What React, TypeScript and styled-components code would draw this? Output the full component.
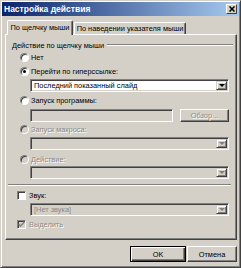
import React from "react";
import styled, { createGlobalStyle } from "styled-components";

const Face = "#d4d0c8";
const Shadow = "#808080";
const DarkShadow = "#404040";
const Highlight = "#ffffff";
const GrayText = "#8c8984";

const GlobalStyle = createGlobalStyle`
  html, body {
    margin: 0;
    padding: 0;
    background: ${Face};
  }
  body {
    font-family: "Liberation Sans", Arial, sans-serif;
    font-size: 7.4px;
    color: #000;
  }
  * {
    box-sizing: border-box;
  }
`;

const Window = styled.div`
  width: 241px;
  height: 268px;
  background: ${Face};
  border: 1px solid;
  border-color: ${Face} ${DarkShadow} ${DarkShadow} ${Face};
  box-shadow: inset 1px 1px ${Highlight}, inset -1px -1px ${Shadow};
  padding: 1px;
  display: flex;
  flex-direction: column;
`;

const TitleBar = styled.div`
  height: 14px;
  background: linear-gradient(to right, #0a246a, #a6caf0);
  display: flex;
  align-items: center;
  justify-content: space-between;
  padding: 0 2px 0 2px;
`;

const Title = styled.span`
  color: #fff;
  font-weight: bold;
  font-size: 8.5px;
`;

const CloseButton = styled.div`
  width: 11px;
  height: 10px;
  background: ${Face};
  border: 1px solid;
  border-color: ${Highlight} ${DarkShadow} ${DarkShadow} ${Highlight};
  display: flex;
  align-items: center;
  justify-content: center;
`;

const Body = styled.div`
  display: flex;
  flex-direction: column;
  padding: 4px 2px 0 3px;
`;

const TabStrip = styled.div`
  display: flex;
  align-items: flex-end;
  gap: 1px;
  padding-left: 2px;
  height: 14px;
  position: relative;
  z-index: 1;
`;

const Tab = styled.div<{ $active?: boolean; $width: number }>`
  width: ${(p) => p.$width}px;
  height: ${(p) => (p.$active ? 15 : 12)}px;
  margin-bottom: ${(p) => (p.$active ? -1 : 0)}px;
  background: ${Face};
  border-top: 1px solid ${Highlight};
  border-left: 1px solid ${Highlight};
  border-right: 1px solid ${DarkShadow};
  border-radius: 2px 2px 0 0;
  box-shadow: inset -1px 0 ${Shadow};
  display: flex;
  align-items: center;
  padding-bottom: ${(p) => (p.$active ? 1 : 0)}px;
  justify-content: center;
  white-space: nowrap;
`;

const Panel = styled.div`
  height: 206px;
  border: 1px solid;
  border-color: ${Highlight} ${DarkShadow} ${DarkShadow} ${Highlight};
  box-shadow: inset -1px -1px ${Shadow};
  padding: 5px 3px 0 6px;
  display: flex;
  flex-direction: column;
`;

const GroupHeader = styled.div`
  height: 10px;
  display: flex;
  align-items: center;
  gap: 3px;
  white-space: nowrap;
`;

const EtchedLine = styled.div<{ $top?: number; $left?: number; $right?: number; $fixed?: boolean }>`
  flex: ${(p) => (p.$fixed ? "none" : 1)};
  height: 2px;
  margin: ${(p) => p.$top ?? 0}px ${(p) => p.$right ?? 0}px 0 ${(p) => p.$left ?? 0}px;
  border-top: 1px solid ${Shadow};
  border-bottom: 1px solid ${Highlight};
`;

const OptionRow = styled.label<{ $top: number; $indent: number; $disabled?: boolean }>`
  height: 12px;
  margin-top: ${(p) => p.$top}px;
  margin-left: ${(p) => p.$indent}px;
  display: flex;
  align-items: center;
  gap: 2px;
  white-space: nowrap;
  color: ${(p) => (p.$disabled ? GrayText : "#000")};
  text-shadow: ${(p) => (p.$disabled ? `1px 1px ${Highlight}` : "none")};
`;

const RadioCircle = styled.span<{ $disabled?: boolean }>`
  width: 9px;
  height: 9px;
  border-radius: 50%;
  border: 1px solid;
  border-color: ${Shadow} ${Highlight} ${Highlight} ${Shadow};
  box-shadow: inset 1px 1px ${DarkShadow};
  background: ${(p) => (p.$disabled ? Face : "#fff")};
  display: flex;
  align-items: center;
  justify-content: center;
  flex: none;
`;

const RadioDot = styled.span`
  width: 3px;
  height: 3px;
  border-radius: 50%;
  background: #000;
`;

const CheckBox = styled.span<{ $disabled?: boolean }>`
  width: 9px;
  height: 9px;
  border: 1px solid;
  border-color: ${Shadow} ${Highlight} ${Highlight} ${Shadow};
  box-shadow: inset 1px 1px ${DarkShadow};
  background: ${(p) => (p.$disabled ? Face : "#fff")};
  display: flex;
  align-items: center;
  justify-content: center;
  flex: none;
  margin-right: 1px;
`;

const FieldRow = styled.div<{ $top: number }>`
  margin-top: ${(p) => p.$top}px;
  margin-left: 18px;
  margin-right: 4px;
  display: flex;
  gap: 7px;
`;

const Sunken = styled.div<{ $disabled?: boolean }>`
  flex: 1;
  height: 13px;
  border: 1px solid;
  border-color: ${Shadow} ${Highlight} ${Highlight} ${Shadow};
  box-shadow: inset 1px 1px ${DarkShadow}, inset -1px -1px ${Face};
  background: ${(p) => (p.$disabled ? Face : "#fff")};
  display: flex;
  align-items: center;
  padding: 1px 1px 1px 3px;
  white-space: nowrap;
  color: ${(p) => (p.$disabled ? GrayText : "#000")};
`;

const ComboText = styled.span`
  flex: 1;
  overflow: hidden;
`;

const DropButton = styled.span`
  width: 11px;
  height: 9px;
  background: ${Face};
  border: 1px solid;
  border-color: ${Face} ${DarkShadow} ${DarkShadow} ${Face};
  box-shadow: inset 1px 1px ${Highlight}, inset -1px -1px ${Shadow};
  display: flex;
  align-items: center;
  justify-content: center;
  flex: none;
`;

const Arrow = styled.span<{ $disabled?: boolean }>`
  width: 0;
  height: 0;
  border-left: 3px solid transparent;
  border-right: 3px solid transparent;
  border-top: 3px solid ${(p) => (p.$disabled ? Shadow : "#000")};
`;

const PushButton = styled.div<{ $width: number; $default?: boolean; $disabled?: boolean }>`
  width: ${(p) => p.$width}px;
  height: 16px;
  flex: none;
  background: ${Face};
  border: 1px solid;
  border-color: ${(p) =>
    p.$default ? "#000" : `${Highlight} ${DarkShadow} ${DarkShadow} ${Highlight}`};
  box-shadow: ${(p) =>
    p.$default
      ? `inset 1px 1px ${Highlight}, inset -1px -1px ${DarkShadow}, inset -2px -2px ${Shadow}`
      : `inset -1px -1px ${Shadow}`};
  display: flex;
  align-items: center;
  justify-content: center;
  color: ${(p) => (p.$disabled ? GrayText : "#000")};
  text-shadow: ${(p) => (p.$disabled ? `1px 1px ${Highlight}` : "none")};
`;

const FieldButton = styled(PushButton)`
  height: 13px;
`;

const Footer = styled.div`
  display: flex;
  justify-content: flex-end;
  align-items: center;
  gap: 1px;
  margin-top: 6px;
  height: 16px;
`;

type ComboProps = { text?: string; disabled?: boolean };

const Combo = ({ text, disabled }: ComboProps) => (
  <Sunken $disabled={disabled}>
    <ComboText>{text}</ComboText>
    <DropButton>
      <Arrow $disabled={disabled} />
    </DropButton>
  </Sunken>
);

type RadioProps = {
  label: string;
  top: number;
  checked?: boolean;
  disabled?: boolean;
};

const Radio = ({ label, top, checked, disabled }: RadioProps) => (
  <OptionRow $top={top} $indent={8} $disabled={disabled}>
    <RadioCircle $disabled={disabled}>{checked && <RadioDot />}</RadioCircle>
    {label}
  </OptionRow>
);

const CheckMark = ({ color }: { color: string }) => (
  <svg width="7" height="7" viewBox="0 0 7 7">
    <path d="M0.5 3 L2.5 5 L6.5 1" stroke={color} strokeWidth="1.4" fill="none" />
  </svg>
);

const App = () => {
  return (
    <>
      <GlobalStyle />
      <Window>
        <TitleBar>
          <Title>Настройка действия</Title>
          <CloseButton>
            <svg width="6" height="6" viewBox="0 0 6 6">
              <path d="M0.5 0.5 L5.5 5.5 M5.5 0.5 L0.5 5.5" stroke="#000" strokeWidth="1.5" />
            </svg>
          </CloseButton>
        </TitleBar>
        <Body>
          <TabStrip>
            <Tab $active $width={66}>По щелчку мыши</Tab>
            <Tab $width={112}>По наведении указателя мыши</Tab>
          </TabStrip>
          <Panel>
            <GroupHeader>
              Действие по щелчку мыши
              <EtchedLine />
            </GroupHeader>
            <Radio label="Нет" top={1} />
            <Radio label="Перейти по гиперссылке:" top={2} checked />
            <FieldRow $top={2}>
              <Combo text="Последний показанный слайд" />
            </FieldRow>
            <Radio label="Запуск программы:" top={2} />
            <FieldRow $top={3}>
              <Sunken $disabled />
              <FieldButton $width={49} $disabled>
                Обзор...
              </FieldButton>
            </FieldRow>
            <Radio label="Запуск макроса:" top={1} disabled />
            <FieldRow $top={2}>
              <Combo disabled />
            </FieldRow>
            <Radio label="Действие:" top={3} disabled />
            <FieldRow $top={1}>
              <Combo disabled />
            </FieldRow>
            <EtchedLine $top={5} $left={-4} $right={2} $fixed />
            <OptionRow $top={3} $indent={5}>
              <CheckBox />
              Звук:
            </OptionRow>
            <FieldRow $top={2}>
              <Combo text="[Нет звука]" disabled />
            </FieldRow>
            <OptionRow $top={2} $indent={5} $disabled>
              <CheckBox $disabled>
                <CheckMark color={Shadow} />
              </CheckBox>
              Выделить
            </OptionRow>
          </Panel>
          <Footer>
            <PushButton $width={56} $default>
              OK
            </PushButton>
            <PushButton $width={50}>Отмена</PushButton>
          </Footer>
        </Body>
      </Window>
    </>
  );
};

export default App;
